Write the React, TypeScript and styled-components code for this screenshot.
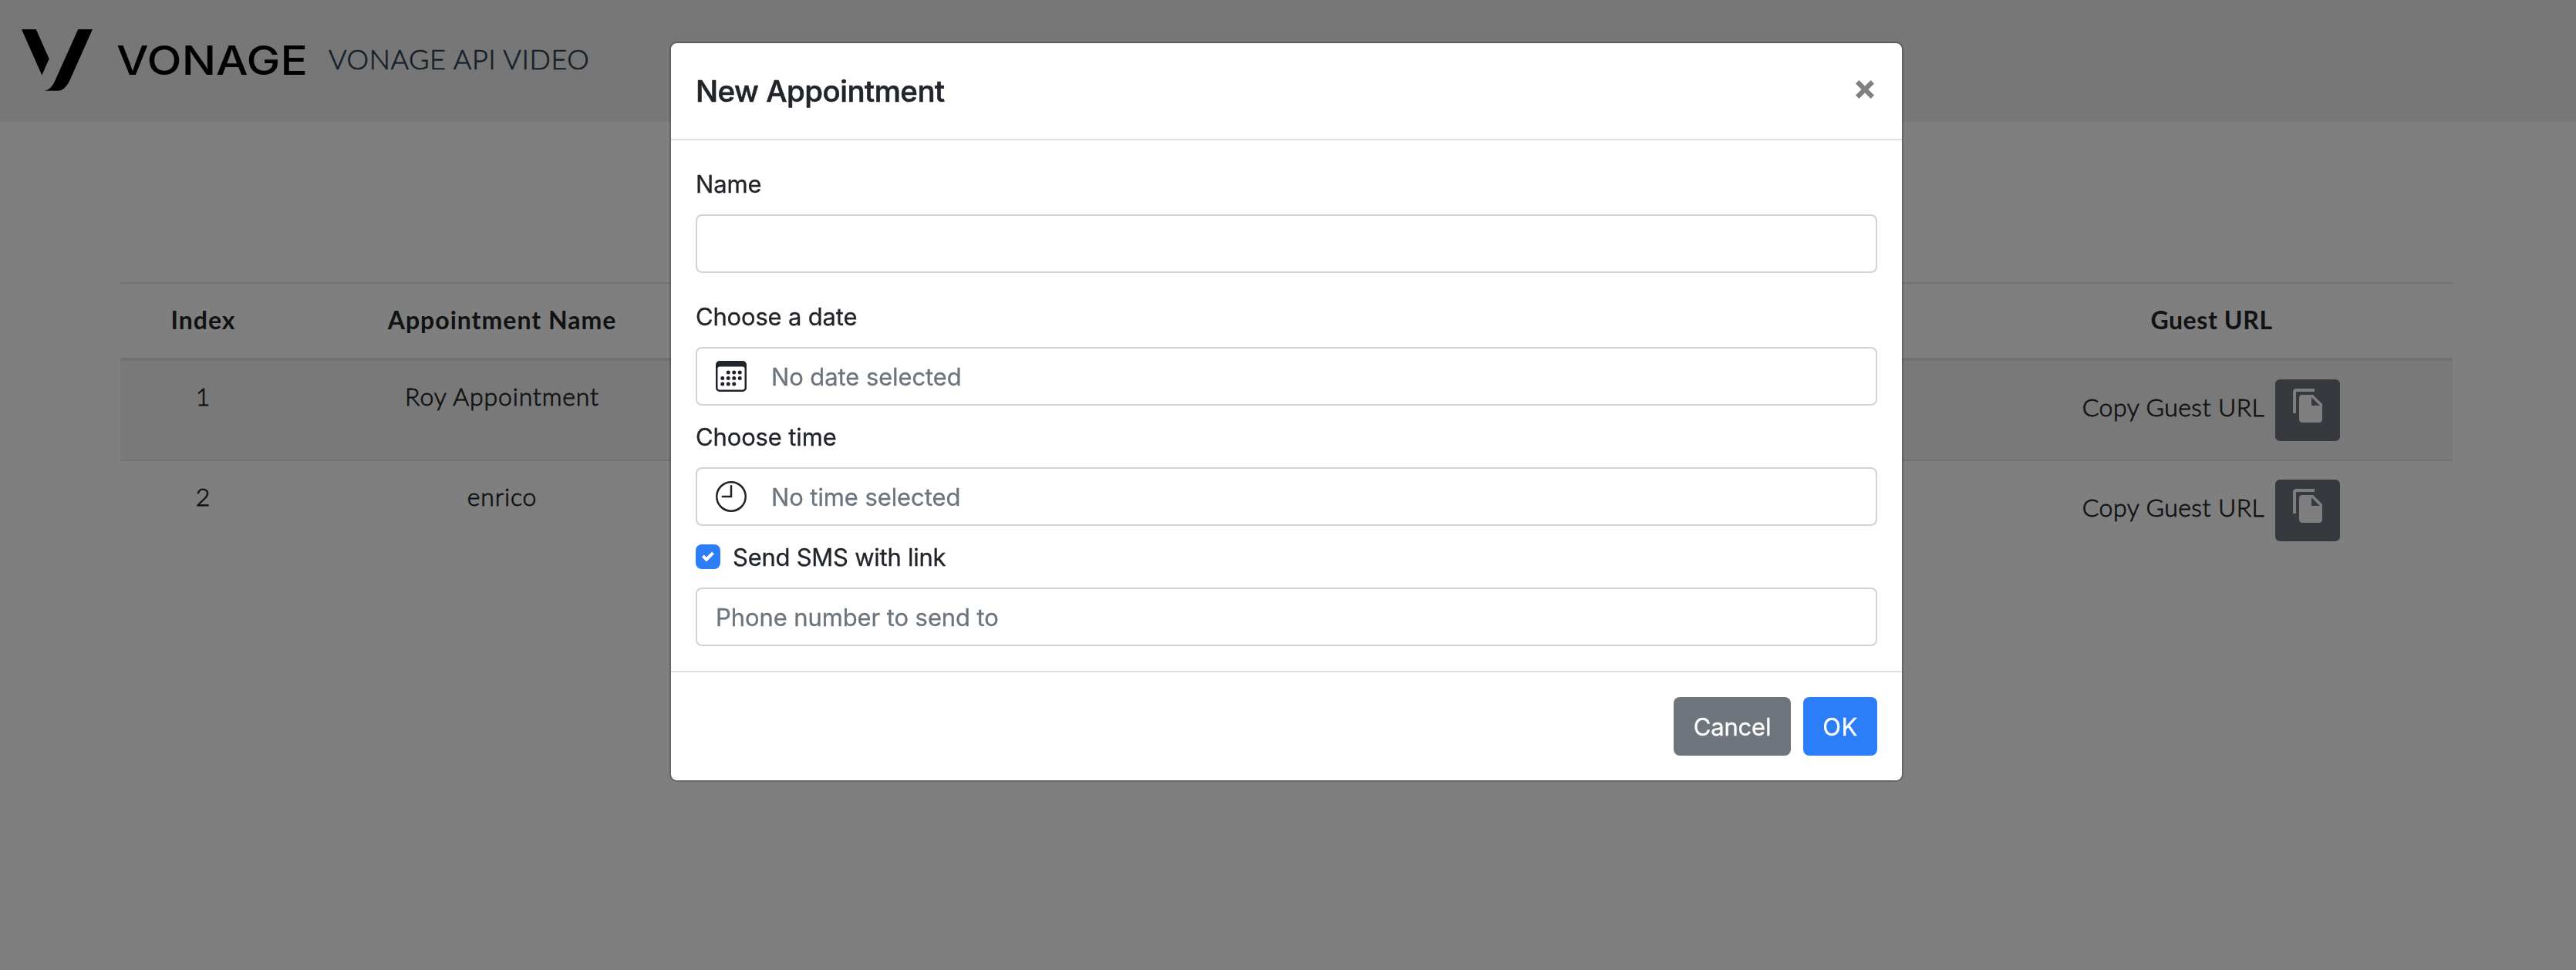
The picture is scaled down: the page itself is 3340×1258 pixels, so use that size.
import React from "react";
import styled, { createGlobalStyle } from "styled-components";
import { BsCalendar3 } from "react-icons/bs";
import { MdFileCopy } from "react-icons/md";

const GlobalStyle = createGlobalStyle`
  *, *::before, *::after { box-sizing: border-box; }
  html, body { margin: 0; padding: 0; background: #fff; }
  body { font-family: Lato, "Open Sans", sans-serif; color: #212529; overflow: hidden; }
  button, input { font: inherit; margin: 0; }
`;

const Page = styled.div`
  height: 1258px;
  display: flex;
  flex-direction: column;
`;

const Navbar = styled.header`
  height: 158px;
  padding: 38px 28px 0;
  display: flex;
  align-items: flex-start;
  background: #eee;
`;

const NavTitle = styled.span`
  margin-left: 26px;
  font-size: 36px;
  font-weight: 300;
  line-height: 76px;
  letter-spacing: 0.58px;
  color: #2c3e50;
  -webkit-text-stroke: 0.7px #2c3e50;
`;

const Table = styled.div`
  margin: 208px 160px 0 156px;
  display: flex;
  flex-direction: column;
`;

const Row = styled.div<{ $striped?: boolean; $ruled?: boolean }>`
  display: grid;
  grid-template-columns: 214px 561px 1fr 626px;
  height: ${(p) => (p.$ruled ? 130 : 128)}px;
  padding: 24px 0;
  text-align: center;
  background: ${(p) => (p.$striped ? "#f2f2f2" : "transparent")};
  border-bottom: ${(p) => (p.$ruled ? "2px solid #dee2e6" : "none")};
`;

const HeadRow = styled(Row)`
  height: 102px;
  border-top: 2px solid #dee2e6;
  border-bottom: 4px solid #dee2e6;
`;

const HeadCell = styled.div<{ $tracking?: number }>`
  padding-left: 1px;
  font-size: 32px;
  font-weight: 700;
  line-height: 45px;
  letter-spacing: ${(p) => p.$tracking ?? 1}px;
`;

const Cell = styled.div`
  padding-left: 1px;
  font-size: 32px;
  font-weight: 300;
  line-height: 43px;
  letter-spacing: 0.85px;
  -webkit-text-stroke: 0.8px #212529;
`;

const CopyCell = styled(Cell)`
  padding-left: 0;
  display: flex;
  justify-content: center;
  line-height: 71px;
  letter-spacing: 0.45px;
`;

const CopyButton = styled.button`
  width: 84px;
  height: 80px;
  margin-left: 14px;
  padding: 10px 0 0 19px;
  display: flex;
  align-items: flex-start;
  border: 0;
  border-radius: 6px;
  background: #6c757d;
  color: #fff;
  font-size: 48px;
`;

const Backdrop = styled.div`
  position: fixed;
  inset: 0;
  padding: 54px 4px 0 0;
  display: flex;
  justify-content: center;
  align-items: flex-start;
  background: rgba(0, 0, 0, 0.5);
`;

const Dialog = styled.section`
  width: 1600px;
  border: 2px solid rgba(0, 0, 0, 0.2);
  border-radius: 9.6px;
  background: #fff;
  background-clip: padding-box;
  font-family: Inter, "Liberation Sans", sans-serif;
  font-size: 31px;
  letter-spacing: -0.1px;
  -webkit-text-stroke-width: 0.3px;
`;

const DialogHeader = styled.div`
  height: 126px;
  padding: 32px 36px 32px 32px;
  display: flex;
  justify-content: space-between;
  border-bottom: 2px solid #dee2e6;
`;

const DialogTitle = styled.h5`
  margin: 0;
  font-size: 38.5px;
  font-weight: 500;
  line-height: 60px;
  letter-spacing: -0.52px;
  -webkit-text-stroke-width: 0.6px;
`;

const CloseButton = styled.button`
  height: 24px;
  margin-top: 16px;
  padding: 0;
  display: flex;
  border: 0;
  background: none;
  color: #808080;
`;

const DialogBody = styled.div`
  padding: 32px;
  display: flex;
  flex-direction: column;
`;

const Label = styled.label<{ $tracking?: number }>`
  height: 48px;
  line-height: 50px;
  letter-spacing: ${(p) => p.$tracking ?? -0.1}px;
`;

const TextInput = styled.input<{ $gapBelow?: number }>`
  width: 100%;
  height: 76px;
  margin: 16px 0 ${(p) => p.$gapBelow ?? 0}px;
  padding: 0 22px 0 24px;
  border: 2px solid #ced4da;
  border-radius: 8px;
  background: #fff;
  outline: 0;
  letter-spacing: -0.1px;
  &::placeholder { color: #6c757d; opacity: 1; }
`;

const Picker = styled.div`
  height: 76px;
  margin: 16px 0;
  padding: 0 24px;
  display: flex;
  align-items: center;
  gap: 32px;
  border: 2px solid #ced4da;
  border-radius: 8px;
`;

const PickerText = styled.span`
  height: 48px;
  line-height: 50px;
  letter-spacing: -0.1px;
  color: #6c757d;
`;

const CheckRow = styled.label`
  height: 48px;
  display: flex;
  align-items: center;
  gap: 16px;
  line-height: 50px;
  letter-spacing: -0.26px;
`;

const CheckBox = styled.span`
  width: 32px;
  height: 32px;
  display: flex;
  align-items: center;
  justify-content: center;
  border-radius: 8px;
  background: #2b7df8;
`;

const CheckText = styled.span`
  height: 48px;
`;

const DialogFooter = styled.div`
  height: 142px;
  padding: 32px;
  display: flex;
  justify-content: flex-end;
  gap: 16px;
  border-top: 2px solid #dee2e6;
`;

const FooterButton = styled.button<{ $primary?: boolean }>`
  width: ${(p) => (p.$primary ? 96 : 152)}px;
  height: 76px;
  padding: 0;
  border: 0;
  border-radius: 8px;
  background: ${(p) => (p.$primary ? "#2b7df8" : "#6e757c")};
  color: #fff;
  letter-spacing: ${(p) => (p.$primary ? 0.4 : -0.17)}px;
`;

const Logo = () => (
  <svg width="372" height="80" viewBox="28 38 372 80" fill="#000">
    <path d="M28 38H46.7L63.7 76.3 54.3 97.4Z" />
    <path d="M101.3 38H120L91 103C86.5 113 81 117.8 74.7 117.8H57.3C63.5 117 67.3 113 70.7 106Z" />
    <text
      x="151"
      y="97"
      fontFamily="Inter, sans-serif"
      fontSize="52"
      fontWeight="550"
      textLength="248"
      lengthAdjust="spacingAndGlyphs"
    >
      VONAGE
    </text>
  </svg>
);

const ClockIcon = () => (
  <svg width="40" height="40" viewBox="0 0 16 16" fill="none" stroke="#212529">
    <circle cx="8" cy="8" r="7.5" />
    <path d="M8 2.5V8H3.5" strokeLinecap="round" strokeLinejoin="miter" />
  </svg>
);

const CheckIcon = () => (
  <svg width="16" height="16" viewBox="0 0 8 8" fill="#fff">
    <path d="M6.564.75l-3.59 3.612-1.538-1.55L0 4.26l2.974 2.99L8 2.193z" />
  </svg>
);

const CloseIcon = () => (
  <svg width="24" height="24" viewBox="0 0 24 24" stroke="currentColor" strokeWidth="6.2">
    <path d="M2.2 2.2 21.8 21.8M21.8 2.2 2.2 21.8" />
  </svg>
);

const appointments = [
  { index: 1, name: "Roy Appointment" },
  { index: 2, name: "enrico" },
];

export default function App() {
  return (
    <>
      <GlobalStyle />
      <Page>
        <Navbar>
          <Logo />
          <NavTitle>VONAGE API VIDEO</NavTitle>
        </Navbar>
        <Table>
          <HeadRow>
            <HeadCell>Index</HeadCell>
            <HeadCell>Appointment Name</HeadCell>
            <HeadCell />
            <HeadCell $tracking={0.6}>Guest URL</HeadCell>
          </HeadRow>
          {appointments.map((a, i) => (
            <Row key={a.index} $striped={i % 2 === 0} $ruled={i < appointments.length - 1}>
              <Cell>{a.index}</Cell>
              <Cell>{a.name}</Cell>
              <Cell />
              <CopyCell>
                Copy Guest URL
                <CopyButton>
                  <MdFileCopy />
                </CopyButton>
              </CopyCell>
            </Row>
          ))}
        </Table>
      </Page>
      <Backdrop>
        <Dialog>
          <DialogHeader>
            <DialogTitle>New Appointment</DialogTitle>
            <CloseButton>
              <CloseIcon />
            </CloseButton>
          </DialogHeader>
          <DialogBody>
            <Label>Name</Label>
            <TextInput $gapBelow={32} />
            <Label $tracking={-0.18}>Choose a date</Label>
            <Picker>
              <BsCalendar3 size={40} />
              <PickerText>No date selected</PickerText>
            </Picker>
            <Label $tracking={-0.14}>Choose time</Label>
            <Picker>
              <ClockIcon />
              <PickerText>No time selected</PickerText>
            </Picker>
            <CheckRow>
              <CheckBox>
                <CheckIcon />
              </CheckBox>
              <CheckText>Send SMS with link</CheckText>
            </CheckRow>
            <TextInput placeholder="Phone number to send to" />
          </DialogBody>
          <DialogFooter>
            <FooterButton>Cancel</FooterButton>
            <FooterButton $primary>OK</FooterButton>
          </DialogFooter>
        </Dialog>
      </Backdrop>
    </>
  );
}
